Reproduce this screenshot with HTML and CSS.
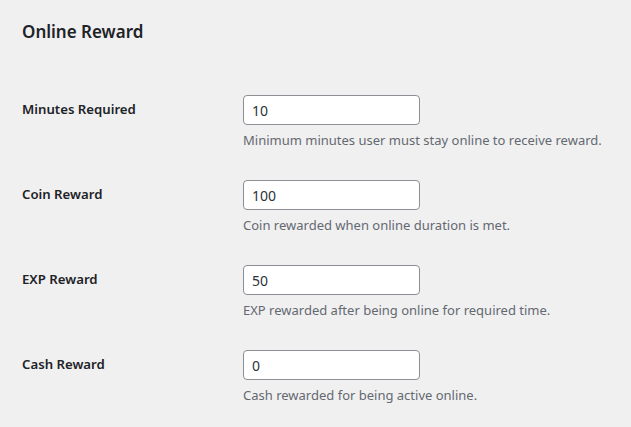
FILE: index.html
```html
<!DOCTYPE html>
<html lang="en">
<head>
    <meta charset="UTF-8">
    <meta name="viewport" content="width=device-width, initial-scale=1.0">
    <title>Online Reward</title>
    <link rel="stylesheet" href="styles.css">
</head>
<body>
    <div class="wrap">
        <h2>Online Reward</h2>

        <div class="form-table">
            <div class="row">
                <label for="minutes">Minutes Required</label>
                <div class="field">
                    <input type="text" id="minutes" value="10">
                    <p class="description">Minimum minutes user must stay online to receive reward.</p>
                </div>
            </div>

            <div class="row">
                <label for="coin">Coin Reward</label>
                <div class="field">
                    <input type="text" id="coin" value="100">
                    <p class="description">Coin rewarded when online duration is met.</p>
                </div>
            </div>

            <div class="row">
                <label for="exp">EXP Reward</label>
                <div class="field">
                    <input type="text" id="exp" value="50">
                    <p class="description">EXP rewarded after being online for required time.</p>
                </div>
            </div>

            <div class="row">
                <label for="cash">Cash Reward</label>
                <div class="field">
                    <input type="text" id="cash" value="0">
                    <p class="description">Cash rewarded for being active online.</p>
                </div>
            </div>
        </div>
    </div>
</body>
</html>
```

FILE: styles.css
```css
body {
    background-color: #f0f0f1;
    color: #1d2327;
    font-family: 'Noto Sans', 'Open Sans', sans-serif;
    font-size: 13px;
    margin: 0;
    padding: 0;
}

.wrap {
    padding: 0 22px;
}

h2 {
    font-size: 17px;
    font-weight: 600;
    line-height: 22px;
    margin: 21px 0 37px;
}

.row {
    display: flex;
    padding: 15px 0;
}

.row label {
    width: 221px;
    flex-shrink: 0;
    font-size: 13.2px;
    font-weight: 600;
    line-height: 29px;
}

.field input {
    box-sizing: border-box;
    width: 177px;
    height: 30px;
    padding: 0 8px;
    background-color: #fff;
    color: #2c3338;
    border: 1px solid #8c8f94;
    border-radius: 4px;
    font-family: inherit;
    font-size: 14px;
    display: block;
}

.description {
    margin: 5px 0 0;
    color: #646970;
    font-size: 13px;
    line-height: 20px;
}
```
